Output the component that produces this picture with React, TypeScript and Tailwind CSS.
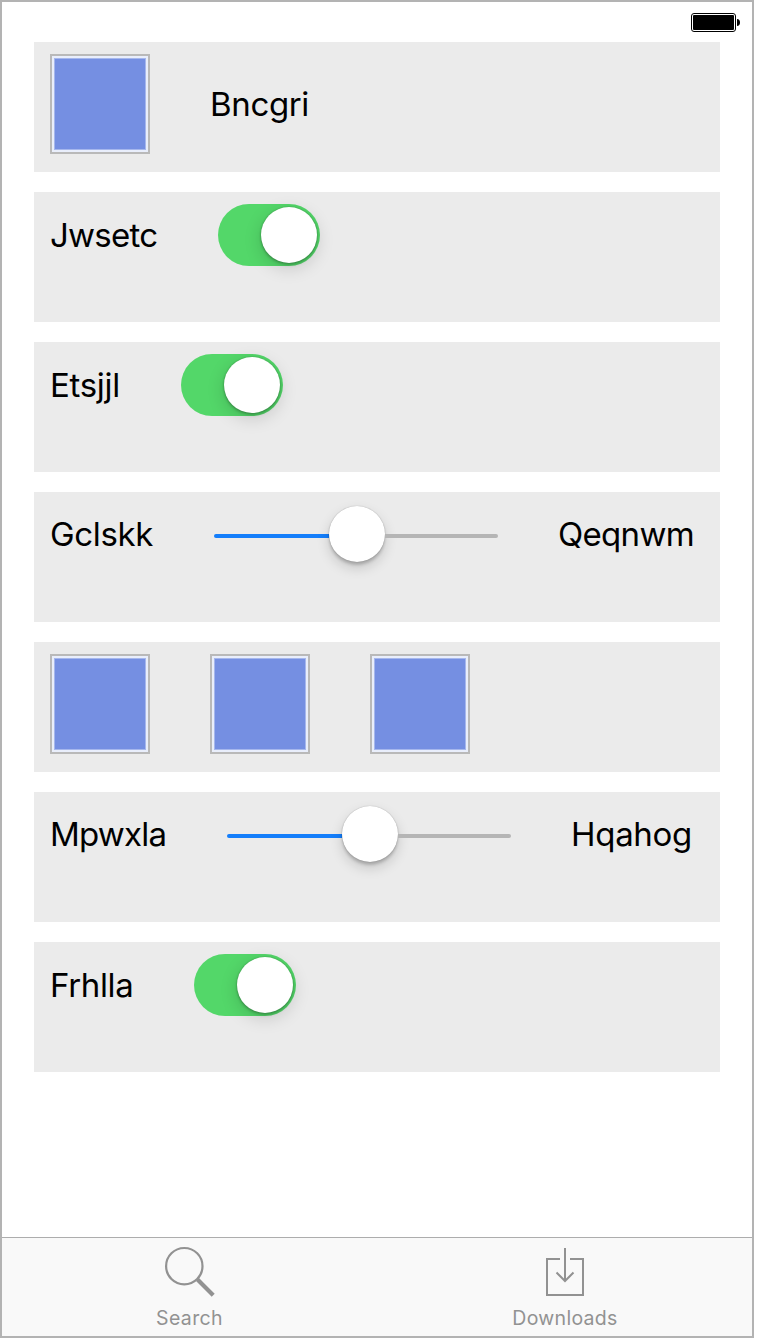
import type { ReactNode } from 'react';

function Card({ children }: { children: ReactNode }) {
  return <section className="flex h-[130px] items-start bg-[#ebebeb] pt-3 pl-4">{children}</section>;
}

function Label({ children, className }: { children: string; className: string }) {
  return <span className={`block shrink-0 whitespace-nowrap text-[33px] leading-10 ${className}`}>{children}</span>;
}

function Swatch() {
  return (
    <div className="size-[100px] shrink-0 border-2 border-[#b9b9b9] bg-[#e9eefb] p-[2px]">
      <div className="size-full border border-[#a6b7ed] bg-[#758fe2]" />
    </div>
  );
}

function Toggle() {
  return (
    <div className="flex h-[62px] w-[102px] shrink-0 items-center justify-end rounded-full bg-[#53d769] pr-[3px]">
      <div className="size-14 rounded-full bg-white shadow-[0_5px_18px_rgba(0,0,0,0.16),0_2px_3px_rgba(0,0,0,0.2),0_0_2px_rgba(0,0,0,0.25)]" />
    </div>
  );
}

function Slider() {
  return (
    <div className="flex h-[60px] w-[284px] shrink-0 items-center">
      <div className="mt-1 h-1 w-[115px] rounded-l-full bg-[#147efb]" />
      <div className="size-14 rounded-full bg-white shadow-[0_6px_13px_rgba(0,0,0,0.16),0_3px_3px_rgba(0,0,0,0.18),0_0_1px_rgba(0,0,0,0.35)]" />
      <div className="mt-1 h-1 flex-1 rounded-r-full bg-[#b5b5b5]" />
    </div>
  );
}

function ToggleRow({ label, className }: { label: string; className: string }) {
  return (
    <Card>
      <div className="flex h-[62px] items-center gap-[60px]">
        <Label className={className}>{label}</Label>
        <Toggle />
      </div>
    </Card>
  );
}

function SliderRow({ left, leftClass, right, rightClass }: { left: string; leftClass: string; right: string; rightClass: string }) {
  return (
    <Card>
      <div className="flex h-[60px] items-center gap-[60px]">
        <Label className={leftClass}>{left}</Label>
        <Slider />
        <Label className={rightClass}>{right}</Label>
      </div>
    </Card>
  );
}

export default function App() {
  return (
    <div className="h-[1340px] w-[760px] bg-white font-['Inter',sans-serif] text-black">
      <div className="flex h-[1338px] w-[754px] flex-col border-2 border-[#b3b3b3]">
        <header className="flex h-10 shrink-0 justify-end pt-[11px] pr-3">
          <svg width="49" height="19" viewBox="0 0 49 19">
            <rect x="0.5" y="0.5" width="44" height="18" rx="2.5" fill="white" stroke="black" />
            <rect x="2" y="2" width="41" height="15" rx="1" fill="black" />
            <path d="M46 6c2 0 3 1.5 3 3.5S48 13 46 13Z" fill="black" />
          </svg>
        </header>
        <main className="flex flex-1 flex-col gap-5 pr-8 pl-8">
          <Card>
            <div className="flex items-center gap-[60px]">
              <Swatch />
              <Label className="w-[100px] tracking-[-0.35px]">Bncgri</Label>
            </div>
          </Card>
          <ToggleRow label="Jwsetc" className="w-[108px] tracking-[-0.75px]" />
          <ToggleRow label="Etsjjl" className="w-[71px] tracking-[-0.3px]" />
          <SliderRow left="Gclskk" leftClass="w-[104px] tracking-[-0.35px]" right="Qeqnwm" rightClass="w-[136px] tracking-[-0.7px]" />
          <Card>
            <div className="flex gap-[60px]">
              <Swatch />
              <Swatch />
              <Swatch />
            </div>
          </Card>
          <SliderRow left="Mpwxla" leftClass="w-[117px] tracking-[-0.8px]" right="Hqahog" rightClass="w-[122px] tracking-[-0.3px]" />
          <ToggleRow label="Frhlla" className="w-[84px] tracking-[-0.35px]" />
        </main>
        <nav className="grid h-[99px] shrink-0 grid-cols-2 border-t border-[#adadad] bg-[#f9f9f9] text-[#929292]">
          <div className="flex flex-col items-center pt-2">
            <svg className="ml-[1px]" width="52" height="52" viewBox="0 0 52 52" fill="none" stroke="currentColor">
              <circle cx="20.3" cy="20.2" r="18.2" strokeWidth="2.2" />
              <path d="m33.5 33.5 15.7 15.7" strokeWidth="4.2" />
            </svg>
            <span className="mt-2 text-[19.5px] leading-6 tracking-[0.35px]">Search</span>
          </div>
          <div className="flex flex-col items-center pt-2">
            <svg className="ml-[1px]" width="40" height="52" viewBox="0 0 40 52" fill="none" stroke="currentColor" strokeWidth="2">
              <path d="M15 13H2v36h36V13H25M20 2v33M11.5 26.5l8.5 8.5 8.5-8.5" />
            </svg>
            <span className="mt-2 ml-[1px] text-[19.5px] leading-6 tracking-[0.3px]">Downloads</span>
          </div>
        </nav>
      </div>
    </div>
  );
}
